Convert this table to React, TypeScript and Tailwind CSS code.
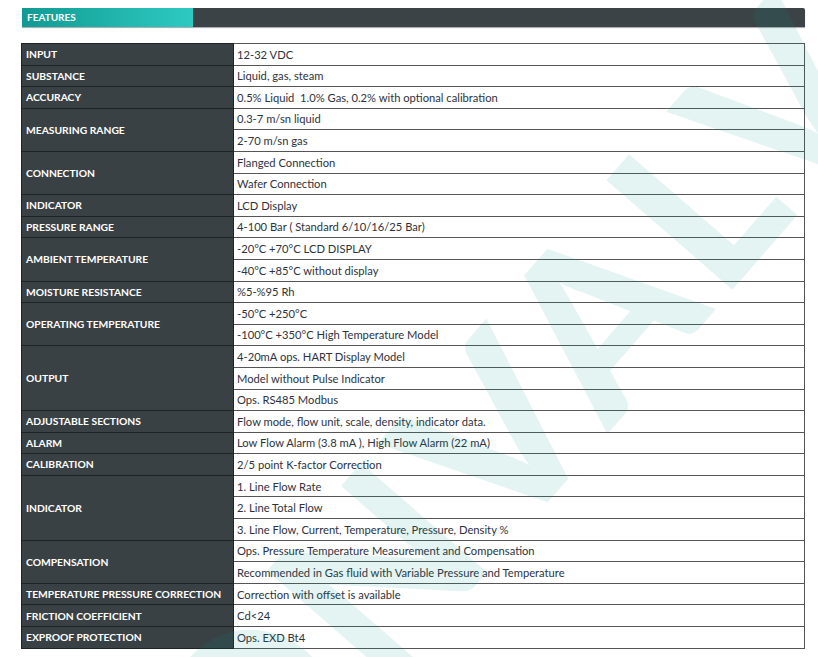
import React from "react";

type Spec = { label: string; values: string[] };

const specs: Spec[] = [
  { label: "INPUT", values: ["12-32 VDC"] },
  { label: "SUBSTANCE", values: ["Liquid, gas, steam"] },
  { label: "ACCURACY", values: ["0.5% Liquid  1.0% Gas, 0.2% with optional calibration"] },
  { label: "MEASURING RANGE", values: ["0.3-7 m/sn liquid", "2-70 m/sn gas"] },
  { label: "CONNECTION", values: ["Flanged Connection", "Wafer Connection"] },
  { label: "INDICATOR", values: ["LCD Display"] },
  { label: "PRESSURE RANGE", values: ["4-100 Bar ( Standard 6/10/16/25 Bar)"] },
  { label: "AMBIENT TEMPERATURE", values: ["-20°C +70°C LCD DISPLAY", "-40°C +85°C without display"] },
  { label: "MOISTURE RESISTANCE", values: ["%5-%95 Rh"] },
  { label: "OPERATING TEMPERATURE", values: ["-50°C +250°C", "-100°C +350°C High Temperature Model"] },
  {
    label: "OUTPUT",
    values: ["4-20mA ops. HART Display Model", "Model without Pulse Indicator", "Ops. RS485 Modbus"],
  },
  { label: "ADJUSTABLE SECTIONS", values: ["Flow mode, flow unit, scale, density, indicator data."] },
  { label: "ALARM", values: ["Low Flow Alarm (3.8 mA ), High Flow Alarm (22 mA)"] },
  { label: "CALIBRATION", values: ["2/5 point K-factor Correction"] },
  {
    label: "INDICATOR",
    values: [
      "1. Line Flow Rate",
      "2. Line Total Flow",
      "3. Line Flow, Current, Temperature, Pressure, Density %",
    ],
  },
  {
    label: "COMPENSATION",
    values: [
      "Ops. Pressure Temperature Measurement and Compensation",
      "Recommended in Gas fluid with Variable Pressure and Temperature",
    ],
  },
  { label: "TEMPERATURE PRESSURE CORRECTION", values: ["Correction with offset is available"] },
  { label: "FRICTION COEFFICIENT", values: ["Cd<24"] },
  { label: "EXPROOF PROTECTION", values: ["Ops. EXD Bt4"] },
];

export default function App() {
  return (
    <div className="relative w-[818px] h-[657px] overflow-hidden bg-white font-['Lato','Open_Sans',sans-serif]">
      {/* header bar */}
      <div className="ml-[22px] mt-[8px] w-[783px] h-[19px] flex shadow-[0_1px_1px_rgba(0,0,0,0.35)] rounded-tr-[2px]">
        <div className="w-[171px] flex items-center pl-[5px] bg-gradient-to-r from-[#0f9b93] to-[#2dcac2] text-white text-[10px] font-bold">
          FEATURES
        </div>
        <div className="flex-1 bg-[#3b4346] rounded-tr-[2px]" />
      </div>

      {/* spec table */}
      <table className="ml-[21px] mt-[16px] w-[784px] table-fixed border-collapse border border-[#4a4a4a]">
        <colgroup>
          <col className="w-[212px]" />
          <col />
        </colgroup>
        <tbody>
          {specs.map((spec, i) =>
            spec.values.map((value, j) => (
              <tr key={`${i}-${j}`} className="h-[21.6px]">
                {j === 0 && (
                  <td
                    rowSpan={spec.values.length}
                    className="bg-[#3a4144] border border-[#1e2324] pl-[4px] text-white text-[10.3px] font-bold leading-none whitespace-nowrap"
                  >
                    {spec.label}
                  </td>
                )}
                <td className="border border-[#555] pl-[3px] text-[#2e323d] text-[11.2px] leading-none whitespace-pre">
                  {value}
                </td>
              </tr>
            )),
          )}
        </tbody>
      </table>

      {/* watermark (decorative, drawn via pseudo-element) */}
      <div className="pointer-events-none absolute inset-0 z-10 flex items-center justify-center">
        <div className="translate-x-[150px] translate-y-[25px] -rotate-[49deg] before:content-['ONVALVE'] before:text-[230px] before:font-black before:leading-none before:tracking-[10px] before:text-[rgba(0,155,150,0.11)] before:whitespace-nowrap" />
      </div>
    </div>
  );
}
